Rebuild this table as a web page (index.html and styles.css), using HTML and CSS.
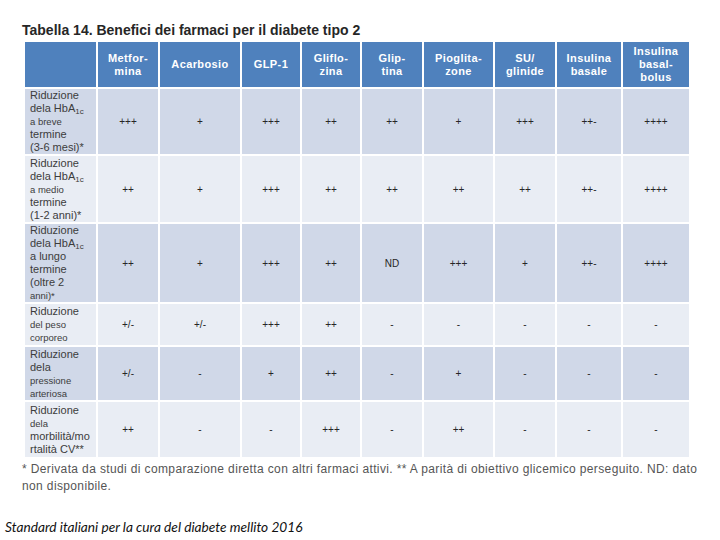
FILE: index.html
```html
<!DOCTYPE html>
<html lang="it">
<head>
<meta charset="utf-8">
<title>Tabella 14</title>
<link rel="stylesheet" href="styles.css">
</head>
<body>
<div class="page">
  <h1 class="title">Tabella 14. Benefici dei farmaci per il diabete tipo 2</h1>
  <div class="table">
    <div class="th"></div>
    <div class="th"><span>Metfor-<br>mina</span></div>
    <div class="th"><span>Acarbosio</span></div>
    <div class="th"><span>GLP-1</span></div>
    <div class="th"><span>Gliflo-<br>zina</span></div>
    <div class="th"><span>Glip-<br>tina</span></div>
    <div class="th"><span>Pioglita-<br>zone</span></div>
    <div class="th"><span>SU/<br>glinide</span></div>
    <div class="th"><span>Insulina<br>basale</span></div>
    <div class="th"><span>Insulina<br>basal-<br>bolus</span></div>

    <div class="rh dark"><span>Riduzione<br>dela HbA<sub>1c</sub><br><span class="sm">a breve</span><br>termine<br>(3-6 mesi)*</span></div>
    <div class="td dark">+++</div><div class="td dark">+</div><div class="td dark">+++</div><div class="td dark">++</div><div class="td dark">++</div><div class="td dark">+</div><div class="td dark">+++</div><div class="td dark">++-</div><div class="td dark">++++</div>

    <div class="rh light"><span>Riduzione<br>dela HbA<sub>1c</sub><br><span class="sm">a medio</span><br>termine<br>(1-2 anni)*</span></div>
    <div class="td light">++</div><div class="td light">+</div><div class="td light">+++</div><div class="td light">++</div><div class="td light">++</div><div class="td light">++</div><div class="td light">++</div><div class="td light">++-</div><div class="td light">++++</div>

    <div class="rh dark"><span>Riduzione<br>dela HbA<sub>1c</sub><br>a lungo<br>termine<br>(oltre 2<br><span class="sm">anni)*</span></span></div>
    <div class="td dark">++</div><div class="td dark">+</div><div class="td dark">+++</div><div class="td dark">++</div><div class="td dark">ND</div><div class="td dark">+++</div><div class="td dark">+</div><div class="td dark">++-</div><div class="td dark">++++</div>

    <div class="rh light"><span>Riduzione<br><span class="sm">del peso</span><br><span class="sm">corporeo</span></span></div>
    <div class="td light">+/-</div><div class="td light">+/-</div><div class="td light">+++</div><div class="td light">++</div><div class="td light">-</div><div class="td light">-</div><div class="td light">-</div><div class="td light">-</div><div class="td light">-</div>

    <div class="rh dark"><span>Riduzione<br>dela<br><span class="sm">pressione</span><br><span class="sm">arteriosa</span></span></div>
    <div class="td dark">+/-</div><div class="td dark">-</div><div class="td dark">+</div><div class="td dark">++</div><div class="td dark">-</div><div class="td dark">+</div><div class="td dark">-</div><div class="td dark">-</div><div class="td dark">-</div>

    <div class="rh light"><span>Riduzione<br><span class="sm">dela</span><br>morbilità/mo<br>rtalità CV**</span></div>
    <div class="td light">++</div><div class="td light">-</div><div class="td light">-</div><div class="td light">+++</div><div class="td light">-</div><div class="td light">++</div><div class="td light">-</div><div class="td light">-</div><div class="td light">-</div>
  </div>
  <p class="note">* Derivata da studi di comparazione diretta con altri farmaci attivi. ** A parità di obiettivo glicemico perseguito. ND: dato non disponibile.</p>
  <p class="source">Standard italiani per la cura del diabete mellito 2016</p>
</div>
</body>
</html>
```

FILE: styles.css
```css
html, body {
  margin: 0;
  padding: 0;
  background: #ffffff;
}

.page {
  width: 720px;
  height: 540px;
  padding: 22px 0 0 22px;
  box-sizing: border-box;
  font-family: "Liberation Sans", Arial, sans-serif;
}

.title {
  margin: 0;
  font-size: 14px;
  line-height: 16px;
  font-weight: bold;
  color: #262626;
}

.table {
  margin: 4px 0 0 3px;
  display: grid;
  grid-template-columns: 71px 60px 80px 58px 58px 60px 69px 60px 64px 66px;
  grid-template-rows: 45px 65px 66px 78px 41px 53px 55px;
  gap: 2px;
  width: 664px;
}

.th {
  background: #4f81bd;
  color: #ffffff;
  font-weight: bold;
  font-size: 11px;
  line-height: 13px;
  letter-spacing: 0.4px;
  display: flex;
  align-items: center;
  justify-content: center;
  text-align: center;
}

.rh {
  font-size: 11px;
  line-height: 13px;
  color: #3c3c3c;
  padding-left: 5px;
  display: flex;
  align-items: center;
  white-space: nowrap;
}

.rh sub {
  font-size: 8px;
  line-height: 0;
  vertical-align: -2px;
}

.sm {
  font-size: 9.5px;
}

.td {
  font-size: 10px;
  color: #262626;
  display: flex;
  align-items: center;
  justify-content: center;
}

.dark {
  background: #d0d8e8;
}

.light {
  background: #e9edf4;
}

.note {
  margin: 4px 0 0 0;
  width: 686px;
  font-size: 12px;
  letter-spacing: 0.37px;
  line-height: 17px;
  color: #555555;
}

.source {
  margin: 24px 0 0 -17px;
  font-family: Lato, "Open Sans", sans-serif;
  font-style: italic;
  font-size: 13.7px;
  line-height: 16px;
  color: #111111;
}
```
